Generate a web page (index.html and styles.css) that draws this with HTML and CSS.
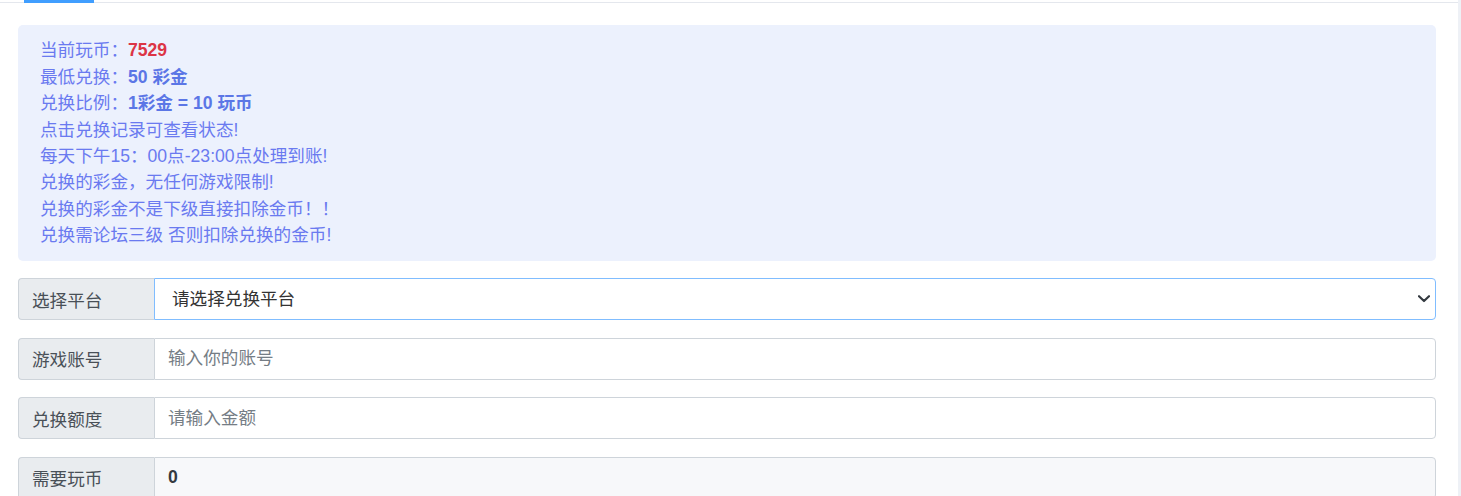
FILE: index.html
```html
<!DOCTYPE html>
<html lang="zh-CN">
<head>
<meta charset="utf-8">
<title>兑换</title>
<link rel="stylesheet" href="styles.css">
</head>
<body>
<div class="page">
  <div class="tabs"><span class="tab-active"></span></div>
  <div class="content">
    <div class="alert">
      <div>当前玩币：<b class="red">7529</b></div>
      <div>最低兑换：<b>50 彩金</b></div>
      <div>兑换比例：<b>1彩金 = 10 玩币</b></div>
      <div>点击兑换记录可查看状态!</div>
      <div>每天下午15：00点-23:00点处理到账!</div>
      <div>兑换的彩金，无任何游戏限制!</div>
      <div>兑换的彩金不是下级直接扣除金币！！</div>
      <div>兑换需论坛三级 否则扣除兑换的金币!</div>
    </div>
    <div class="group">
      <span class="label">选择平台</span>
      <div class="select-wrap">
        <select class="control select focus">
          <option>请选择兑换平台</option>
        </select>
        <svg class="chev" width="12" height="8" viewBox="0 0 12 8"><path d="M1 1.2 L6 6 L11 1.2" fill="none" stroke="#343a40" stroke-width="2.2" stroke-linecap="round" stroke-linejoin="round"/></svg>
      </div>
    </div>
    <div class="group">
      <span class="label">游戏账号</span>
      <input class="control" type="text" placeholder="输入你的账号">
    </div>
    <div class="group">
      <span class="label">兑换额度</span>
      <input class="control" type="text" placeholder="请输入金额">
    </div>
    <div class="group">
      <span class="label">需要玩币</span>
      <div class="control readonly">0</div>
    </div>
  </div>
</div>
</body>
</html>
```

FILE: styles.css
```css
html, body {
  margin: 0;
  padding: 0;
  background: #ffffff;
}
body {
  font-family: "Liberation Sans", "Noto Sans CJK SC", sans-serif;
  font-size: 17.6px;
  color: #333;
  overflow: hidden;
}
.page {
  width: 1458px;
  height: 496px;
  border-right: 3px solid #eef1f6;
  box-sizing: content-box;
}
.tabs {
  height: 2px;
  border-bottom: 1px solid #e4e7ed;
}
.tab-active {
  display: block;
  margin-left: 24px;
  width: 70px;
  height: 3px;
  background: #409eff;
}
.content {
  padding: 22px 22px 0 18px;
}
.alert {
  background: #ecf1fd;
  border-radius: 5px;
  padding: 12.4px 20px 12.4px 22px;
  line-height: 26.4px;
  color: #6a7af0;
  font-size: 17.6px;
}
.alert b {
  font-weight: bold;
  color: #5b76e6;
}
.alert b.red {
  color: #dc3545;
}
.group {
  display: flex;
  height: 42px;
  margin-top: 17.6px;
}
.alert + .group {
  margin-top: 17px;
}
.label {
  width: 136px;
  box-sizing: border-box;
  flex: none;
  background: #e9ecef;
  border: 1px solid #ced4da;
  border-right: 0;
  border-radius: 4px 0 0 4px;
  padding: 0 13px;
  display: flex;
  align-items: center;
  color: #495057;
  font-size: 17.6px;
}
.control {
  flex: 1;
  min-width: 0;
  box-sizing: border-box;
  height: 42px;
  border: 1px solid #ced4da;
  border-radius: 0 4px 4px 0;
  padding: 0 13px;
  font-family: "Liberation Sans", "Noto Sans CJK SC", sans-serif;
  font-size: 17.6px;
  color: #495057;
  background: #fff;
  outline: none;
  margin: 0;
}
.control::placeholder {
  color: #757d85;
}
.select-wrap {
  flex: 1;
  display: flex;
  position: relative;
}
.select {
  -webkit-appearance: none;
  appearance: none;
  padding-left: 17px;
  color: #333;
}
.focus {
  border-color: #80bdff;
}
.chev {
  position: absolute;
  right: 6px;
  top: 17px;
  pointer-events: none;
}
.readonly {
  display: flex;
  align-items: center;
  background: #f7f8fa;
  font-weight: bold;
  color: #343a40;
}
```
